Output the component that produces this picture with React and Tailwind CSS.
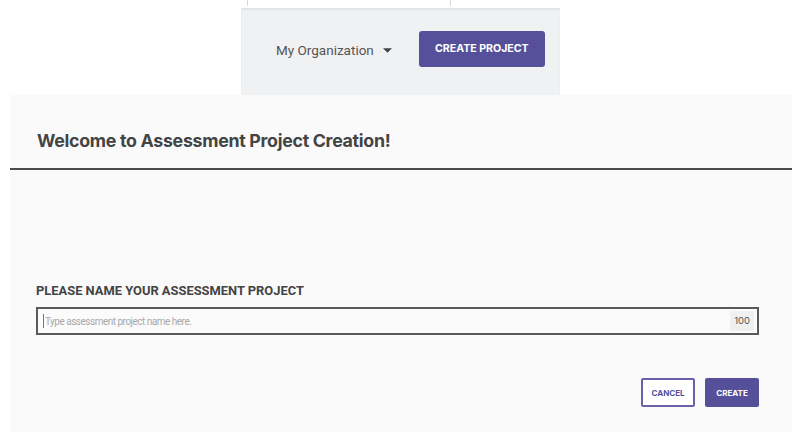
import React from 'react';

const App = () => {
  return (
    <div className="w-[801px] h-[436px] bg-white overflow-hidden font-['Roboto',sans-serif]">
      {/* top toolbar fragment */}
      <div className="h-[95px] flex flex-col">
        <div className="h-[8px] flex">
          <div className="ml-[247px] w-px h-[6px] bg-[#d8d8d8]" />
          <div className="ml-[202px] w-px h-[6px] bg-[#d8d8d8]" />
        </div>
        <div className="ml-[241px] w-[319px] flex-1 bg-[#f0f1f3] shadow-[inset_0_2px_2px_rgba(0,0,0,0.06)] flex items-center pl-[35px] pb-[6px]">
          <button className="mt-[3px] flex items-center gap-[9px] text-[13.5px] text-[#555] font-['Roboto',sans-serif]">
            My Organization
            <svg width="9" height="5" viewBox="0 0 10 5" className="mt-[1px]">
              <path d="M0 0h10L5 5z" fill="#444" />
            </svg>
          </button>
          <button className="ml-[27px] w-[126px] h-[36px] rounded-[3px] bg-[#56509a] text-white text-[10.6px] font-bold font-['Inter',sans-serif]">
            CREATE PROJECT
          </button>
        </div>
      </div>

      {/* dialog */}
      <div className="ml-[10px] w-[782px] h-[337px] bg-[#fafafa] flex flex-col">
        <div className="h-[75px] border-b-2 border-[#4b4b4b] flex items-start pl-[27px] pt-[33px]">
          <h1 className="text-[17.8px] leading-[26px] font-bold text-[#444] font-['Inter',sans-serif] tracking-[-0.3px]">
            Welcome to Assessment Project Creation!
          </h1>
        </div>
        <div className="flex flex-col pl-[26px] pr-[33px] pt-[111px]">
          <label className="text-[12.9px] font-bold text-[#444]">
            PLEASE NAME YOUR ASSESSMENT PROJECT
          </label>
          <div className="mt-[7px] h-[28px] border-2 border-[#5a5a5a] bg-[#fbfbfb] flex items-center pl-[5px] pr-[3px]">
            <input
              className="flex-1 bg-transparent outline-none text-[10px] tracking-[-0.5px] text-[#333] font-['Roboto',sans-serif] placeholder:text-[#a8a8a8] border-l border-[#777] pl-px h-[14px]"
              placeholder="Type assessment project name here."
            />
            <span className="bg-[#f0f0f0] text-[9.5px] text-[#555] px-[4px] h-[20px] flex items-center font-['Inter',sans-serif]">
              100
            </span>
          </div>
          <div className="mt-[43px] flex justify-end gap-[10px]">
            <button className="w-[54px] h-[29px] border-2 border-[#6a62a8] bg-white text-[#56509a] text-[8px] font-bold rounded-[2px] font-['Inter',sans-serif]">
              CANCEL
            </button>
            <button className="w-[54px] h-[29px] bg-[#56509a] text-white text-[8px] font-bold rounded-[2px] font-['Inter',sans-serif]">
              CREATE
            </button>
          </div>
        </div>
      </div>
    </div>
  );
};

export default App;
